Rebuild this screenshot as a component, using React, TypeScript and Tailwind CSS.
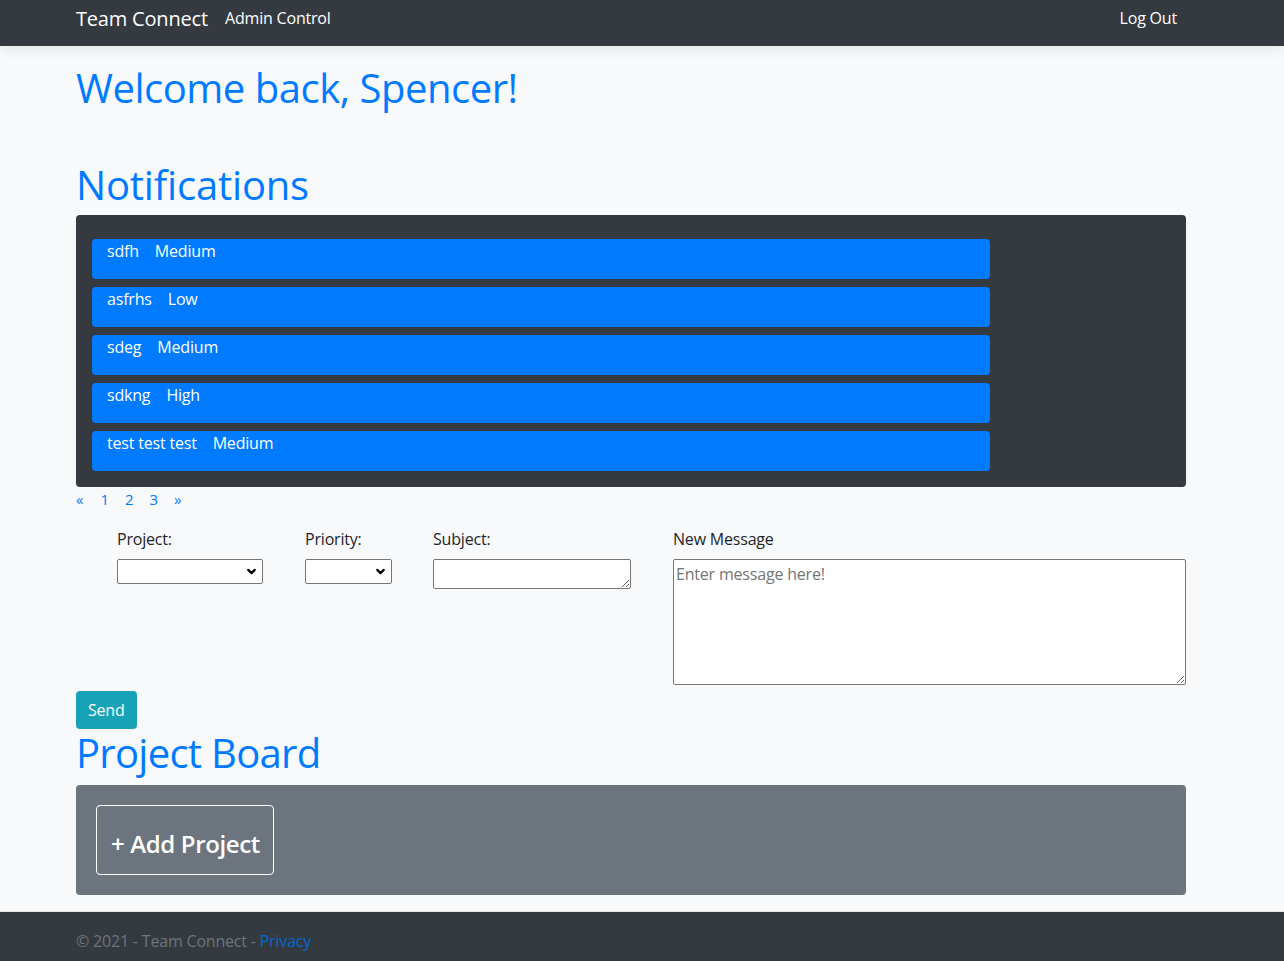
import { ChevronDown } from 'lucide-react';

const NOTIFICATIONS = [
  { subject: 'sdfh', priority: 'Medium' },
  { subject: 'asfrhs', priority: 'Low' },
  { subject: 'sdeg', priority: 'Medium' },
  { subject: 'sdkng', priority: 'High' },
  { subject: 'test test test', priority: 'Medium' },
] as const;

const PAGES = ['«', '1', '2', '3', '»'];

function Select({ width }: { width: string }) {
  return (
    <div className={`relative h-[25px] ${width}`}>
      <select className="h-full w-full appearance-none rounded-[2px] border border-[#767676] bg-white" />
      <ChevronDown
        className="pointer-events-none absolute right-[5px] top-[6px] h-[13px] w-[13px] text-black"
        strokeWidth={4}
      />
    </div>
  );
}

export default function App() {
  return (
    <div className="flex min-h-[961px] flex-col bg-[#f8f9fa] font-['Open_Sans',sans-serif] text-[16px] leading-[24px] tracking-[-0.012em] text-[#212529]">
      {/* navbar */}
      <header className="relative z-10 h-[46px] bg-[#343a40] shadow-[0_4px_12px_rgba(0,0,0,0.08)]">
        <nav className="ml-[76px] flex w-[1110px] items-start">
          <span className="w-[141px] pt-[4px] text-[20px] leading-[30px] text-white">Team Connect</span>
          <a className="px-[8px] pt-[6px] text-white">Admin Control</a>
          <a className="ml-auto px-[9px] pt-[6px] text-white">Log Out</a>
        </nav>
      </header>

      <main className="ml-[76px] w-[1110px] flex-1">
        <h1 className="mt-[18px] text-[40px] font-normal leading-[48px] tracking-[-0.012em] text-[#007bff]">
          Welcome back, Spencer!
        </h1>
        <h1 className="mt-[49px] mb-[6px] text-[40px] font-normal leading-[48px] text-[#007bff]">
          Notifications
        </h1>

        <div className="flex flex-col gap-[8px] rounded-[4px] bg-[#343a40] px-[16px] pt-[24px] pb-[16px]">
          {NOTIFICATIONS.map((n, i) => (
            <div
              key={i}
              className="flex h-[40px] w-[898px] gap-[16px] rounded-[4px] bg-[#007bff] pl-[15px] text-white"
            >
              <span>{n.subject}</span>
              <span>{n.priority}</span>
            </div>
          ))}
        </div>

        <div className="flex text-[#007bff]">
          {PAGES.map((p) => (
            <a key={p} className="w-[24.5px] text-[15px]">
              {p}
            </a>
          ))}
        </div>

        <form className="mt-[16px] flex">
          <div className="ml-[41px] w-[188px]">
            <label className="mb-[8px] block">Project:</label>
            <Select width="w-[146px]" />
          </div>
          <div className="w-[128px]">
            <label className="mb-[8px] block">Priority:</label>
            <Select width="w-[87px]" />
          </div>
          <div className="w-[240px]">
            <label className="mb-[8px] block">Subject:</label>
            <textarea className="block h-[30px] w-[198px] rounded-[2px] border border-[#767676] bg-white p-[2px]" />
          </div>
          <div className="flex-1">
            <label className="mb-[8px] block">New Message</label>
            <textarea
              placeholder="Enter message here!"
              className="block h-[126px] w-full rounded-[2px] border border-[#767676] bg-white p-[2px] placeholder:text-[#757575]"
            />
          </div>
        </form>

        <button className="mt-[6px] block h-[38px] rounded-[4px] bg-[#17a2b8] px-[12px] text-white">
          Send
        </button>

        <h1 className="mb-[8px] text-[40px] font-normal leading-[48px] tracking-[-0.018em] text-[#007bff]">
          Project Board
        </h1>

        <div className="rounded-[4px] bg-[#6c757d] p-[20px]">
          <div className="h-[70px] w-[178px] whitespace-nowrap rounded-[4px] border border-white px-[14px] pt-[21px] text-[24px] font-semibold leading-[34px] tracking-[-0.015em] text-white">
            + Add Project
          </div>
        </div>
      </main>

      <footer className="mt-[16px] h-[50px] overflow-hidden border-t border-[#e5e5e5] bg-[#343a40] leading-[58px]">
        <div className="ml-[76px] text-[#6c757d]">
          © 2021 - Team Connect - <a className="text-[#0366d6]">Privacy</a>
        </div>
      </footer>
    </div>
  );
}
